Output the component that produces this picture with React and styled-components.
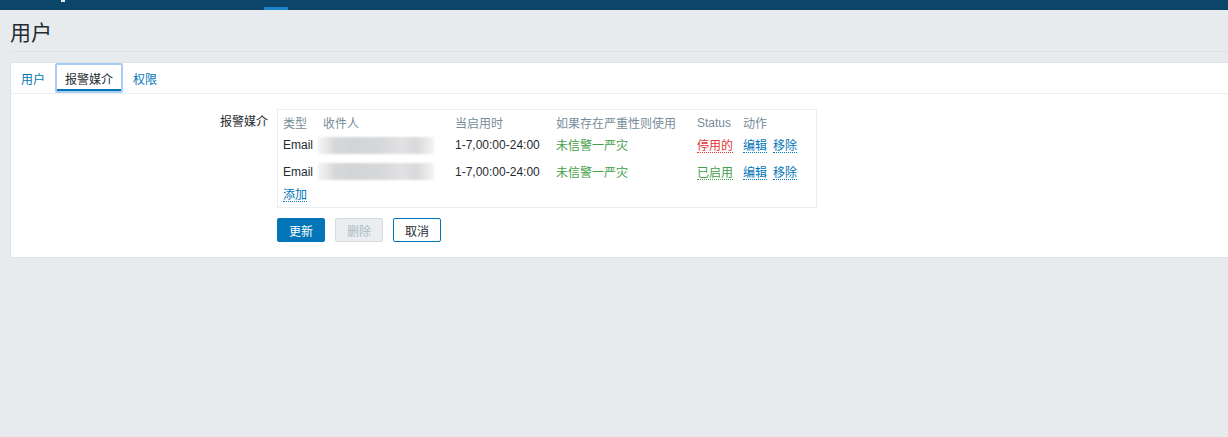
import React from 'react';
import styled, { createGlobalStyle } from 'styled-components';

const GlobalStyle = createGlobalStyle`
  html, body {
    margin: 0;
    padding: 0;
    background: #e8ebed;
    overflow: hidden;
  }
  body {
    font-family: "Liberation Sans", Arial, "Noto Sans CJK SC", sans-serif;
    font-size: 12px;
    color: #1f2c33;
  }
`;

const Page = styled.div`
  width: 1228px;
  height: 437px;
  background: #e8ebed;
`;

const TopBar = styled.div`
  height: 10px;
  background: #0b466a;
  position: relative;
`;

const TopMark = styled.span`
  position: absolute;
  left: 61px;
  top: 0;
  width: 4px;
  height: 2px;
  background: #dfe6ec;
`;

const TopActive = styled.span`
  position: absolute;
  left: 264px;
  top: 7px;
  width: 24px;
  height: 3px;
  background: #1b83c7;
`;

const Header = styled.header`
  margin-left: 10px;
  height: 41px;
  border-bottom: 1px solid #dde2e5;
  display: flex;
  align-items: center;
`;

const Title = styled.h1`
  margin: 2px 0 0;
  font-size: 21px;
  font-weight: normal;
  color: #1f2c33;
  font-family: "Noto Sans CJK SC", sans-serif;
  line-height: 1;
`;

const Panel = styled.section`
  margin: 10px -2px 0 10px;
  background: #fff;
  border: 1px solid #dde2e5;
`;

const TabBar = styled.nav`
  display: flex;
  border-bottom: 1px solid #ebeef0;
  height: 30px;
`;

const Tab = styled.div`
  box-sizing: border-box;
  height: 30px;
  padding: 0 ${({ $active }) => ($active ? '8px' : '10px')};
  display: flex;
  align-items: center;
  font-size: 12px;
  color: ${({ $active }) => ($active ? '#1f2c33' : '#0275b8')};
  font-family: "Noto Sans CJK SC", sans-serif;
  border: ${({ $active }) => ($active ? '2px solid #a9cbf4' : 'none')};
  box-shadow: ${({ $active }) => ($active ? 'inset 0 -2px 0 #0275b8' : 'none')};
  border-radius: 2px;
`;

const Form = styled.div`
  padding: 15px 0 15px;
  display: grid;
  grid-template-columns: 257px 1fr;
  column-gap: 9px;
  row-gap: 10px;
`;

const Label = styled.div`
  text-align: right;
  padding-top: 4px;
  font-family: "Noto Sans CJK SC", sans-serif;
  font-size: 12px;
  line-height: 16px;
`;

const MediaTable = styled.div`
  width: 540px;
  box-sizing: border-box;
  border: 1px solid #ebeef0;
  padding: 4px 5px 4px;
  display: grid;
  grid-template-columns: 40px 132px 101px 141px 46px 1fr;
  grid-template-rows: 18px 26px 27px 18px;
  align-items: center;
`;

const Th = styled.div`
  color: #768d99;
  font-family: "Noto Sans CJK SC", "Liberation Sans", sans-serif;
  font-size: 12px;
  line-height: 16px;
`;

const ThLatin = styled(Th)`
  font-family: "Liberation Sans", Arial, sans-serif;
`;

const Td = styled.div`
  font-size: 12px;
  line-height: 16px;
  color: ${({ $color }) => $color || '#1f2c33'};
  font-family: ${({ $cjk }) =>
    $cjk ? '"Noto Sans CJK SC", sans-serif' : '"Liberation Sans", Arial, sans-serif'};
  display: flex;
  gap: 6px;
`;

const LinkText = styled.span`
  color: ${({ $color }) => $color || '#0275b8'};
  font-family: "Noto Sans CJK SC", sans-serif;
  font-size: 12px;
  line-height: 15px;
  border-bottom: 1px dotted ${({ $color }) => $color || '#0275b8'};
  cursor: pointer;
`;

const Blur = styled.div`
  width: 116px;
  height: 17px;
  margin-left: -5px;
  background: linear-gradient(
    90deg,
    #f4f4f4 0%,
    #e6e7e8 8%,
    #d6d8d9 14%,
    #d2d4d6 30%,
    #d7d8da 55%,
    #e2e2e4 72%,
    #d8d9da 85%,
    #f4f4f4 100%
  );
  filter: blur(1px);
`;

const Actions = styled.div`
  grid-column: 2;
  display: flex;
  gap: 10px;
`;

const Button = styled.button`
  box-sizing: border-box;
  width: 48px;
  height: 24px;
  font-family: "Noto Sans CJK SC", sans-serif;
  font-size: 12px;
  border-radius: 2px;
  padding: 0;
  cursor: pointer;
  border: 1px solid ${({ $variant }) =>
    $variant === 'primary' ? '#0275b8' : $variant === 'disabled' ? '#d8dcdf' : '#0275b8'};
  background: ${({ $variant }) =>
    $variant === 'primary' ? '#0275b8' : $variant === 'disabled' ? '#ebeef0' : '#fff'};
  color: ${({ $variant }) =>
    $variant === 'primary' ? '#fff' : $variant === 'disabled' ? '#acbbc2' : '#1f2c33'};
`;

const rows = [
  { status: '停用的', statusColor: '#e33734' },
  { status: '已启用', statusColor: '#429e47' },
];

export default function App() {
  return (
    <Page>
      <GlobalStyle />
      <TopBar>
        <TopMark />
        <TopActive />
      </TopBar>
      <Header>
        <Title>用户</Title>
      </Header>
      <Panel>
        <TabBar>
          <Tab>用户</Tab>
          <Tab $active>报警媒介</Tab>
          <Tab>权限</Tab>
        </TabBar>
        <Form>
          <Label>报警媒介</Label>
          <MediaTable>
            <Th>类型</Th>
            <Th>收件人</Th>
            <Th>当启用时</Th>
            <Th>如果存在严重性则使用</Th>
            <ThLatin>Status</ThLatin>
            <Th>动作</Th>
            {rows.map((r, i) => (
              <React.Fragment key={i}>
                <Td>Email</Td>
                <Td><Blur /></Td>
                <Td>1-7,00:00-24:00</Td>
                <Td $cjk $color="#429e47">未信警一严灾</Td>
                <Td><LinkText $color={r.statusColor}>{r.status}</LinkText></Td>
                <Td>
                  <LinkText>编辑</LinkText>
                  <LinkText>移除</LinkText>
                </Td>
              </React.Fragment>
            ))}
            <Td><LinkText>添加</LinkText></Td>
          </MediaTable>
          <Actions>
            <Button $variant="primary">更新</Button>
            <Button $variant="disabled">删除</Button>
            <Button>取消</Button>
          </Actions>
        </Form>
      </Panel>
    </Page>
  );
}
